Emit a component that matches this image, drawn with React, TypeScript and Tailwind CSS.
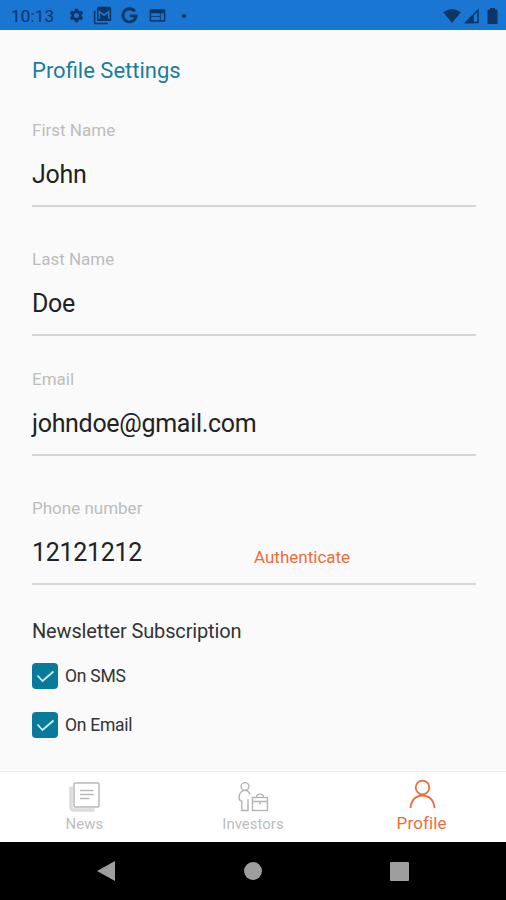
// App.tsx
import { MdSettings, MdSignalWifi4Bar, MdWeb } from "react-icons/md";

const fields = [
  { label: "First Name", value: "John", gap: "mt-[35px]" },
  { label: "Last Name", value: "Doe", gap: "mt-[42px]" },
  { label: "Email", value: "johndoe@gmail.com", gap: "mt-[33px]" },
  { label: "Phone number", value: "12121212", gap: "mt-[42px]", action: "Authenticate" },
];

const subscriptions = ["On SMS", "On Email"];

function StatusBar() {
  return (
    <header className="flex h-[30px] items-center bg-[#1976d2] pt-px pr-[8px] pl-[11px] text-[#0c3563]">
      <span className="w-[57px] text-[17px] leading-5 tracking-[0.2px]">10:13</span>
      <MdSettings className="size-[17px]" />
      <svg viewBox="0 0 24 24" className="ml-[8px] size-[19px]" fill="currentColor">
        <path d="M1 6h2v15h16v2H3q-2 0-2-2z" />
        <path fillRule="evenodd" d="M7 1h14q2 0 2 2v14q0 2-2 2H7q-2 0-2-2V3q0-2 2-2zm0 4v11h2V9l5 4 5-4v7h2V5l-7 5z" />
      </svg>
      <svg viewBox="0 0 24 24" className="ml-[9px] size-[17px]" fill="none" stroke="currentColor" strokeWidth="4">
        <path d="M19.5 6.2A9.3 9.3 0 1 0 21.3 12.5H12.5" />
      </svg>
      <MdWeb className="ml-[10px] size-[19px]" />
      <span className="ml-[15px] size-1 rounded-full bg-[#0c3563]" />
      <MdSignalWifi4Bar className="ml-auto size-[18px]" />
      <svg viewBox="0 0 16 16" className="ml-[3px] size-[16px]" fill="none" stroke="currentColor" strokeWidth="1.5">
        <path d="M2 14.5L14 2v12.5z" />
        <path d="M2 14.5L9 7.5v7z" fill="currentColor" />
      </svg>
      <svg viewBox="0 0 11 16" className="ml-[7px] h-4 w-[11px]" fill="currentColor">
        <path d="M3 0h5v1.500h1.500q1 0 1 1V15q0 1-1 1h-8q-1 0-1-1V2.500q0-1 1-1H3z" />
      </svg>
    </header>
  );
}

function Checkbox({ label }: { label: string }) {
  return (
    <label className="flex h-[26px] items-center gap-[7px]">
      <span className="flex size-[26px] items-center justify-center rounded-[4px] bg-[#087b9c]">
        <svg viewBox="0 0 26 26" className="size-[26px]" fill="none" stroke="#d5edf3" strokeWidth="1.7">
          <path d="M5.500 12.500l5 5.500L21.500 8.500" />
        </svg>
      </span>
      <span className="text-[17.5px] leading-5 tracking-[-0.25px] text-[#333]">{label}</span>
    </label>
  );
}

function NewsIcon() {
  return (
    <svg viewBox="0 0 32 32" className="size-8" fill="none" stroke="#b9b9b9" strokeWidth="1.5">
      <path d="M3 5.500V26q0 3 3 3h20.500" stroke="#dcdcdc" strokeWidth="3.500" />
      <rect x="6" y="2" width="25" height="24" rx="1" />
      <path d="M12 9.500h13.500M12 13.500h13.500M12 17.500h9.500" />
    </svg>
  );
}

function InvestorsIcon() {
  return (
    <svg viewBox="0 0 32 32" className="size-8" fill="none" stroke="#b4b4b4" strokeWidth="1.400">
      <circle cx="8" cy="5.500" r="3.900" />
      <path d="M13 13.500c-1-3-3-4.200-5-4.200-4 0-6 3.500-6 7.500 0 2 1 3 2.800 3.300V29.500h6.200V18" />
      <rect x="15.500" y="16.500" width="15" height="13" />
      <path d="M15.500 20.500h15M19.500 16.500c0-4.500 7-4.500 7 0M23 20v3.500" />
    </svg>
  );
}

function ProfileIcon() {
  return (
    <svg viewBox="0 0 32 32" className="size-8" fill="none" stroke="#f26b3a" strokeWidth="1.800">
      <circle cx="16.500" cy="8.500" r="6.800" />
      <path d="M4.500 29c.5-8 5.500-12.500 12-12.500s11.500 4.500 12 12.500" />
    </svg>
  );
}

export default function App() {
  return (
    <div className="flex h-[900px] w-[506px] flex-col overflow-hidden bg-[#fafafa] font-['Roboto',sans-serif]">
      <StatusBar />
      <main className="flex-1 pt-[27px] pr-[30px] pl-[32px]">
        <h1 className="h-[28px] text-[22px] leading-[28px] text-[#1a7d9c]">Profile Settings</h1>
        {fields.map((field) => (
          <div key={field.label} className={`h-[87px] border-b-2 border-[#d6d6d6] ${field.gap}`}>
            <p className="h-5 text-[17px] leading-5 text-[#bdbdbd]">{field.label}</p>
            <div className="mt-[19px] flex h-8 items-center">
              <span className="w-[222px] text-[25px] leading-8 tracking-[-0.3px] text-[#222]">{field.value}</span>
              {field.action && (
                <button className="mt-[7px] text-[17px] leading-5 text-[#f26b3a]">{field.action}</button>
              )}
            </div>
          </div>
        ))}
        <h2 className="mt-[33px] h-[26px] text-[20px] leading-[26px] tracking-[-0.15px] text-[#333]">
          Newsletter Subscription
        </h2>
        <div className="mt-[19px] flex flex-col gap-[23px]">
          {subscriptions.map((name) => (
            <Checkbox key={name} label={name} />
          ))}
        </div>
      </main>
      <nav className="grid h-[71px] grid-cols-3 border-t border-[#eee] bg-white text-[15px] leading-[18px] text-[#bdbdbd]">
        <div className="flex flex-col items-center pt-[9px]">
          <NewsIcon />
          <span className="mt-[2px]">News</span>
        </div>
        <div className="flex flex-col items-center pt-[9px]">
          <InvestorsIcon />
          <span className="mt-[2px]">Investors</span>
        </div>
        <div className="flex flex-col items-center pt-[7px] text-[17px] text-[#f26b3a]">
          <ProfileIcon />
          <span className="mt-[3px] tracking-[0.15px]">Profile</span>
        </div>
      </nav>
      <footer className="flex h-[58px] items-center justify-between bg-black pr-[97px] pl-[97px]">
        <svg viewBox="0 0 18 20" className="h-5 w-[18px]" fill="#9e9e9e">
          <path d="M18 0v20L0 10z" />
        </svg>
        <span className="size-[18px] rounded-full bg-[#9e9e9e]" />
        <span className="size-[19px] rounded-[1px] bg-[#9e9e9e]" />
      </footer>
    </div>
  );
}
